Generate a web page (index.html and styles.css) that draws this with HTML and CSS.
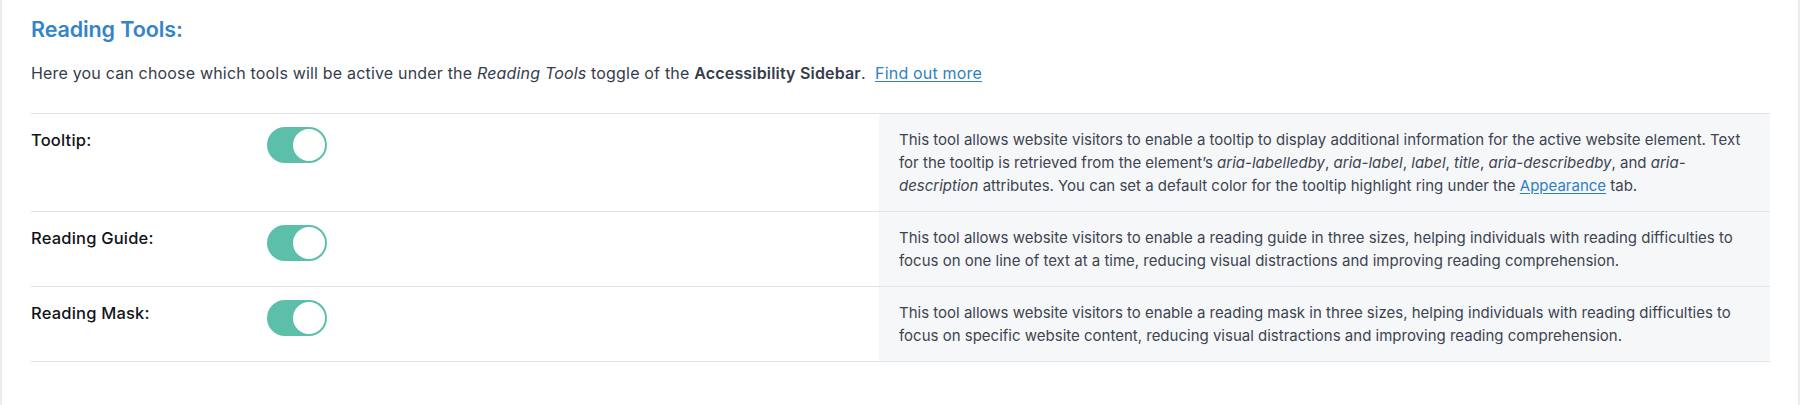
FILE: index.html
```html
<!DOCTYPE html>
<html lang="en">
<head>
<meta charset="utf-8">
<title>Reading Tools</title>
<link rel="stylesheet" href="styles.css">
</head>
<body>
<div class="card">
  <h2 class="title">Reading Tools:</h2>
  <p class="intro">Here you can choose which tools will be active under the <em>Reading Tools</em> toggle of the <strong>Accessibility Sidebar</strong>.&nbsp; <a href="#" class="link">Find out more</a></p>
  <div class="table">
    <div class="row">
      <div class="label">Tooltip:</div>
      <div class="control"><span class="toggle"><span class="knob"></span></span></div>
      <div class="desc">This tool allows website visitors to enable a tooltip to display additional information for the active website element. Text for the tooltip is retrieved from the element’s <em>aria-labelledby</em>, <em>aria-label</em>, <em>label</em>, <em>title</em>, <em>aria-describedby</em>, and <em>aria-description</em> attributes. You can set a default color for the tooltip highlight ring under the <a href="#" class="link">Appearance</a> tab.</div>
    </div>
    <div class="row">
      <div class="label">Reading Guide:</div>
      <div class="control"><span class="toggle"><span class="knob"></span></span></div>
      <div class="desc">This tool allows website visitors to enable a reading guide in three sizes, helping individuals with reading difficulties to focus on one line of text at a time, reducing visual distractions and improving reading comprehension.</div>
    </div>
    <div class="row">
      <div class="label">Reading Mask:</div>
      <div class="control"><span class="toggle"><span class="knob"></span></span></div>
      <div class="desc">This tool allows website visitors to enable a reading mask in three sizes, helping individuals with reading difficulties to focus on specific website content, reducing visual distractions and improving reading comprehension.</div>
    </div>
  </div>
</div>
</body>
</html>
```
FILE: styles.css
```css
html, body {
  margin: 0;
  padding: 0;
  background: #ffffff;
}
body {
  font-family: Inter, "Noto Sans", "Liberation Sans", sans-serif;
  color: #3c4350;
}
.card {
  height: 405px;
  box-sizing: border-box;
  border-left: 2px solid #ececee;
  border-right: 2px solid #ececee;
  padding: 0 28px 0 29px;
}
.title {
  margin: 0;
  padding-top: 15px;
  font-size: 21.5px;
  line-height: 28px;
  font-weight: 600;
  color: #3584c9;
  letter-spacing: -0.1px;
}
.intro {
  margin: 0;
  padding-top: 18px;
  font-size: 16px;
  line-height: 24px;
  letter-spacing: 0.18px;
  color: #353c4a;
}
.intro strong {
  font-weight: 600;
}
.link {
  color: #2f7fc4;
  text-decoration: underline;
  text-underline-offset: 2px;
}
.table {
  margin-top: 28px;
  border-top: 1px solid #e1e3e7;
}
.row {
  display: grid;
  grid-template-columns: 236px 1fr 891px;
  border-bottom: 1px solid #e1e3e7;
}
.label {
  padding-top: 15px;
  font-size: 16.5px;
  line-height: 23px;
  font-weight: 500;
  letter-spacing: 0.2px;
  color: #111418;
}
.control {
  padding-top: 13px;
}
.toggle {
  display: flex;
  justify-content: flex-end;
  align-items: center;
  width: 60px;
  height: 36px;
  box-sizing: border-box;
  padding: 2px;
  border-radius: 18px;
  background: #5bbfa9;
}
.knob {
  width: 32px;
  height: 32px;
  border-radius: 50%;
  background: #ffffff;
}
.desc {
  background: #f6f7f9;
  padding: 14px 20px 14px 20px;
  font-size: 15px;
  line-height: 23px;
  color: #3d4450;
}
```
